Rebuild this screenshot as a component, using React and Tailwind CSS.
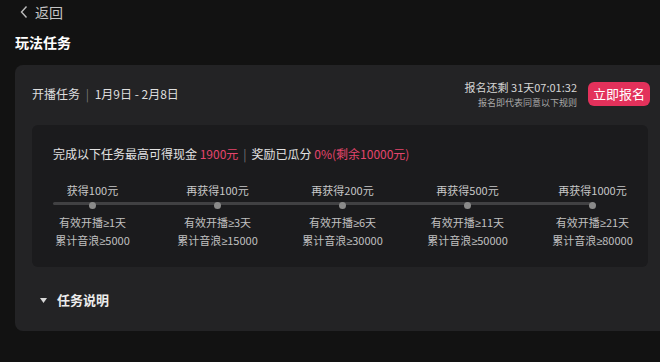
import React from "react";

const milestones = [
  { reward: "获得100元", days: ["有效开播", "1天"], waves: ["累计音浪", "5000"] },
  { reward: "再获得100元", days: ["有效开播", "3天"], waves: ["累计音浪", "15000"] },
  { reward: "再获得200元", days: ["有效开播", "6天"], waves: ["累计音浪", "30000"] },
  { reward: "再获得500元", days: ["有效开播", "11天"], waves: ["累计音浪", "50000"] },
  { reward: "再获得1000元", days: ["有效开播", "21天"], waves: ["累计音浪", "80000"] },
];

function Cond({ parts }) {
  return (
    <div className="text-[11px] leading-[17px] text-[#c0c0c0]">
      {parts[0]}
      <span style={{ fontFamily: '"Liberation Sans", sans-serif' }}>≥</span>
      {parts[1]}
    </div>
  );
}

export default function App() {
  return (
    <div
      className="w-[660px] h-[362px] overflow-hidden bg-[#121212] text-white"
      style={{ fontFamily: '"Noto Sans CJK SC", "Noto Sans", sans-serif' }}
    >
      <div className="pt-[2px] pl-[19px] flex items-center h-[22px] text-[14px] leading-[20px] text-[#c4c4c4]">
        <svg width="10" height="14" viewBox="0 0 10 14" className="mr-[6px]">
          <path d="M7.5 1.5 L2.5 7 L7.5 12.5" fill="none" stroke="#bdbdbd" strokeWidth="1.4" />
        </svg>
        <span>返回</span>
      </div>

      <div className="mt-[10px] pl-[15px] text-[14px] leading-[20px] font-bold text-white">玩法任务</div>

      <div className="mt-[13px] ml-[15px] w-[660px] rounded-[8px] bg-[#232325] pt-[17px] pl-[17px] pb-[21px]">
        <div className="w-[618px] h-[24px] flex items-center justify-between">
          <div className="text-[12px] leading-[16px] text-[#dedede]">
            开播任务 <span className="text-[#777] mx-[3px]">|</span> 1月9日 - 2月8日
          </div>
          <div className="flex items-center">
            <div className="flex flex-col items-end mr-[11px]">
              <div className="text-[11px] leading-[15px] text-[#d6d6d6]">报名还剩 31天07:01:32</div>
              <div className="text-[9px] leading-[12px] text-[#a8a8a8] mt-[2px]">报名即代表同意以下规则</div>
            </div>
            <button className="h-[24px] w-[62px] rounded-[6px] bg-[#e3315b] text-[13px] leading-[24px] text-white">
              立即报名
            </button>
          </div>
        </div>

        <div className="mt-[19px] w-[616px] h-[142px] rounded-[6px] bg-[#1b1b1d] pt-[21px]">
          <div className="pl-[21px] text-[12px] leading-[16px] text-[#e2e2e2]">
            完成以下任务最高可得现金 <span className="text-[#e4456c]">1900元</span>
            <span className="text-[#777] mx-[5px]">|</span>
            奖励已瓜分 <span className="text-[#e4456c]">0%(剩余10000元)</span>
          </div>

          <div className="relative mt-[20px] -ml-[2px] grid grid-cols-[repeat(5,125px)]">
            <div className="absolute left-[23px] top-[20px] h-[3px] w-[538px] rounded-full bg-[#414143]" />
            {milestones.map((m) => (
              <div key={m.reward} className="relative flex flex-col items-center">
                <div className="text-[11px] leading-[16px] text-[#c8c8c8]">{m.reward}</div>
                <div className="h-[14px] flex items-center">
                  <div className="h-[7px] w-[7px] rounded-full bg-[#8a8a8a]" />
                </div>
                <div className="mt-[2px]">
                  <Cond parts={m.days} />
                </div>
                <Cond parts={m.waves} />
              </div>
            ))}
          </div>
        </div>

        <div className="mt-[23px] pl-[8px] flex items-center h-[20px]">
          <svg width="7" height="5" viewBox="0 0 7 5" className="mr-[10px]">
            <path d="M0 0 L7 0 L3.5 5 Z" fill="#d8d8d8" />
          </svg>
          <span className="text-[13px] leading-[20px] font-bold text-[#ececec]">任务说明</span>
        </div>
      </div>
    </div>
  );
}
